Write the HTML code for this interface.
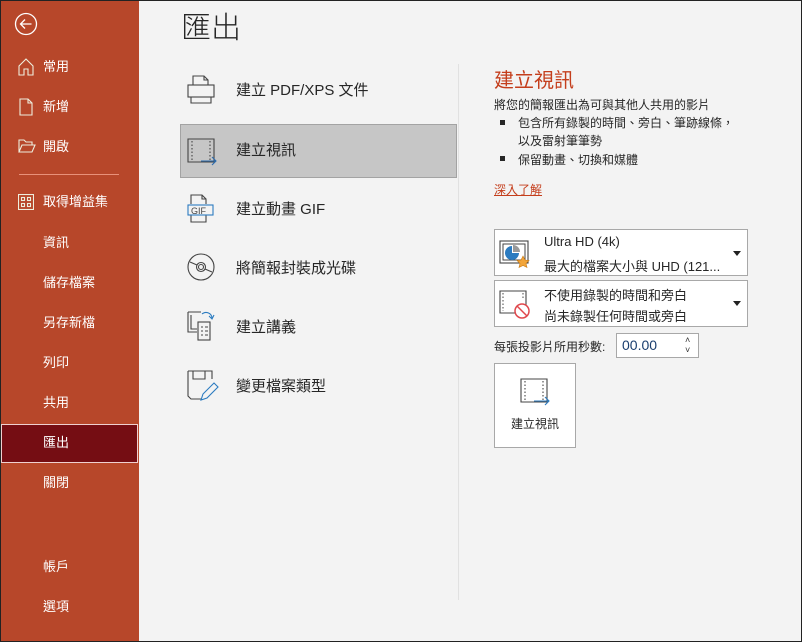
<!DOCTYPE html>
<html><head><meta charset="utf-8"><style>
*{margin:0;padding:0;box-sizing:border-box}
body{width:802px;height:642px;overflow:hidden;background:#f3f3f3;font-family:"Liberation Sans","Noto Sans CJK TC",sans-serif;position:relative;color:#262626}
.frame{position:absolute;inset:0;border:1px solid #222;pointer-events:none;z-index:9}
.side{position:absolute;left:0;top:0;width:139px;height:642px;background:#b7472a;color:#fff}
.si{position:absolute;left:43px;font-size:13px;line-height:16px}
.ic{position:absolute;left:18px}
.sel{position:absolute;left:1px;top:424px;width:137px;height:39px;background:#750d13;border:1px solid #f0d0d0}
.a{position:absolute}
.row{position:absolute;left:236px;font-size:15px;color:#262626}
.r{position:absolute;font-size:12px;color:#262626}
.box{position:absolute;background:#fff;border:1px solid #a8a8a8}
</style></head><body>
<div class="side">
<svg class="a" style="left:14px;top:12px" width="24" height="24" viewBox="0 0 24 24" fill="none" stroke="#fff" stroke-width="1.3"><circle cx="12" cy="12" r="10.5"/><path d="M17.5 12H6.5M11 7.5 6.5 12 11 16.5"/></svg>
<svg class="ic" style="top:58px" width="16" height="18" viewBox="0 0 16 18" fill="none" stroke="#eed" stroke-width="1.1"><path d="M1 8 8 1l7 7v9h-5v-6H6v6H1z"/></svg>
<div class="si" style="top:59px">常用</div>
<svg class="ic" style="top:98px" width="16" height="18" viewBox="0 0 16 18" fill="none" stroke="#eed" stroke-width="1.1"><path d="M2 1h8l4 4v12H2zM10 1v4h4"/></svg>
<div class="si" style="top:99px">新增</div>
<svg class="ic" style="top:139px" width="18" height="14" viewBox="0 0 18 14" fill="none" stroke="#eed" stroke-width="1.1"><path d="M1 13V1h5l2 2h6v3M1 13l3-7h13l-3 7z"/></svg>
<div class="si" style="top:139px">開啟</div>
<div class="a" style="left:19px;top:174px;width:100px;height:1px;background:#e8917a"></div>
<svg class="ic" style="top:194px" width="16" height="16" viewBox="0 0 16 16" fill="none" stroke="#eed" stroke-width="1.1"><rect x=".5" y=".5" width="15" height="15"/><rect x="3.5" y="3.5" width="3" height="3"/><rect x="9.5" y="3.5" width="3" height="3"/><rect x="3.5" y="9.5" width="3" height="3"/><rect x="9.5" y="9.5" width="3" height="3"/></svg>
<div class="si" style="top:194px">取得增益集</div>
<div class="si" style="top:235px">資訊</div>
<div class="si" style="top:275px">儲存檔案</div>
<div class="si" style="top:315px">另存新檔</div>
<div class="si" style="top:355px">列印</div>
<div class="si" style="top:395px">共用</div>
<div class="sel"></div>
<div class="si" style="top:435px">匯出</div>
<div class="si" style="top:475px">關閉</div>
<div class="si" style="top:559px">帳戶</div>
<div class="si" style="top:599px">選項</div>
</div>

<div class="a" style="left:181px;top:3px;font-size:30px;font-weight:300;color:#262626">匯出</div>

<div class="a" style="left:180px;top:124px;width:277px;height:54px;background:#c6c6c6;border:1px solid #a3a3a3"></div>
<div class="a" style="left:458px;top:64px;width:1px;height:536px;background:#e1e1e1"></div>

<svg class="a" style="left:187px;top:75px" width="28" height="30" viewBox="0 0 28 30" fill="none" stroke="#444" stroke-width="1.1"><path d="M6 10V1h11l4 4v5M17 1v4h4"/><rect x="1" y="10" width="26" height="12"/><path d="M4 22v6h20v-6"/></svg>
<div class="row" style="top:79px">建立 PDF/XPS 文件</div>

<svg class="a" style="left:187px;top:138px" width="32" height="28" viewBox="0 0 32 28" fill="none" stroke="#444" stroke-width="1.1"><path d="M1 1h26v23H1z"/><path d="M5 3v19M23 3v19" stroke-dasharray="1.5 2"/><path d="M14 23h15M25 19l4 4-4 4" stroke="#2b6cb0"/></svg>
<div class="row" style="top:139px">建立視訊</div>

<svg class="a" style="left:187px;top:194px" width="28" height="30" viewBox="0 0 28 30" fill="none" stroke="#444" stroke-width="1.1"><path d="M4 10V1h11l4 4v5M15 1v4h4M4 21v7h15v-7"/><rect x="1" y="11" width="25" height="10" stroke="#2b7bc0"/><text x="4" y="20" font-size="9" fill="#444" stroke="none" font-family="Liberation Sans">GIF</text></svg>
<div class="row" style="top:198px">建立動畫 GIF</div>

<svg class="a" style="left:187px;top:253px" width="28" height="28" viewBox="0 0 28 28" fill="none" stroke="#444" stroke-width="1.1"><circle cx="14" cy="14" r="13"/><circle cx="14" cy="14" r="4.5"/><circle cx="14" cy="14" r="2.5"/><path d="M3 9l7 3M25 19l-7-3"/></svg>
<div class="row" style="top:257px">將簡報封裝成光碟</div>

<svg class="a" style="left:187px;top:310px" width="30" height="32" viewBox="0 0 30 32" fill="none" stroke="#444" stroke-width="1.1"><path d="M1 2h13M1 2v20h9M4 5v14h6"/><rect x="11" y="12" width="12" height="18"/><path d="M14 17h2M18 17h3M14 21h2M18 21h3M14 25h2M18 25h3"/><path d="M15 4a6 6 0 0 1 10 4M22 6l3 3 2-4" stroke="#2b7bc0"/></svg>
<div class="row" style="top:316px">建立講義</div>

<svg class="a" style="left:187px;top:370px" width="32" height="32" viewBox="0 0 32 32" fill="none" stroke="#444" stroke-width="1.1"><path d="M1 1h24v8M1 1v25l3 3h10M6 1v8h12V1"/><path d="M14 30l2-6 11-11 4 4-11 11z" stroke="#2b7bc0"/></svg>
<div class="row" style="top:375px">變更檔案類型</div>

<div class="a" style="left:494px;top:64px;font-size:20px;color:#c43e1c">建立視訊</div>
<div class="r" style="left:494px;top:96px">將您的簡報匯出為可與其他人共用的影片</div>
<div class="a" style="left:500px;top:120px;width:5px;height:5px;background:#262626"></div>
<div class="r" style="left:518px;top:114px;line-height:18px">包含所有錄製的時間、旁白、筆跡線條，<br>以及雷射筆筆勢</div>
<div class="a" style="left:500px;top:156px;width:5px;height:5px;background:#262626"></div>
<div class="r" style="left:518px;top:151px">保留動畫、切換和媒體</div>
<div class="r" style="left:494px;top:181px;color:#c43e1c;text-decoration:underline">深入了解</div>

<div class="box" style="left:494px;top:229px;width:254px;height:47px"></div>
<svg class="a" style="left:499px;top:240px" width="32" height="30" viewBox="0 0 32 30" fill="none"><rect x="1" y="1" width="28" height="22" stroke="#444" stroke-width="1.1"/><rect x="4" y="4" width="22" height="16" stroke="#444" stroke-width="1"/><path d="M13 6a7 7 0 1 0 7 7h-7z" fill="#2b7bc0"/><path d="M14 5v7h7a7 7 0 0 0-7-7z" fill="#999"/><path d="M24 16l2 4 4 .5-3 3 1 4-4-2-4 2 1-4-3-3 4-.5z" fill="#f2a53a" stroke="#c97a14" stroke-width=".6"/></svg>
<div class="r" style="left:544px;top:234px;font-size:13px">Ultra HD (4k)</div>
<div class="r" style="left:544px;top:256px;font-size:13px">最大的檔案大小與 UHD (121...</div>
<div class="a" style="left:733px;top:251px;border:4px solid transparent;border-top:5px solid #222"></div>

<div class="box" style="left:494px;top:280px;width:254px;height:47px"></div>
<svg class="a" style="left:499px;top:290px" width="32" height="30" viewBox="0 0 32 30" fill="none"><path d="M1 1h26v22H1z" stroke="#444" stroke-width="1.1"/><path d="M4 3v18M24 3v6" stroke="#444" stroke-dasharray="1.5 2"/><circle cx="23" cy="21" r="7" fill="#fff" stroke="#e0474c" stroke-width="1.5"/><path d="M18 16l10 10" stroke="#e0474c" stroke-width="1.5"/></svg>
<div class="r" style="left:544px;top:285px;font-size:13px">不使用錄製的時間和旁白</div>
<div class="r" style="left:544px;top:306px;font-size:13px">尚未錄製任何時間或旁白</div>
<div class="a" style="left:733px;top:301px;border:4px solid transparent;border-top:5px solid #222"></div>

<div class="r" style="left:494px;top:338px">每張投影片所用秒數:</div>
<div class="box" style="left:616px;top:333px;width:83px;height:25px"></div>
<div class="r" style="left:622px;top:337px;font-size:14px;color:#1a3e6e">00.00</div>
<div class="a" style="left:685px;top:335px;font-size:9px;color:#333;line-height:10px">˄<br>˅</div>

<div class="box" style="left:494px;top:363px;width:82px;height:85px"></div>
<svg class="a" style="left:520px;top:378px" width="32" height="28" viewBox="0 0 32 28" fill="none" stroke="#444" stroke-width="1.1"><path d="M1 1h26v23H1z"/><path d="M5 3v19M23 3v19" stroke-dasharray="1.5 2"/><path d="M14 23h15M25 19l4 4-4 4" stroke="#2b7bc0"/></svg>
<div class="r" style="left:511px;top:415px;font-size:12px">建立視訊</div>

<div class="frame"></div>
</body></html>
